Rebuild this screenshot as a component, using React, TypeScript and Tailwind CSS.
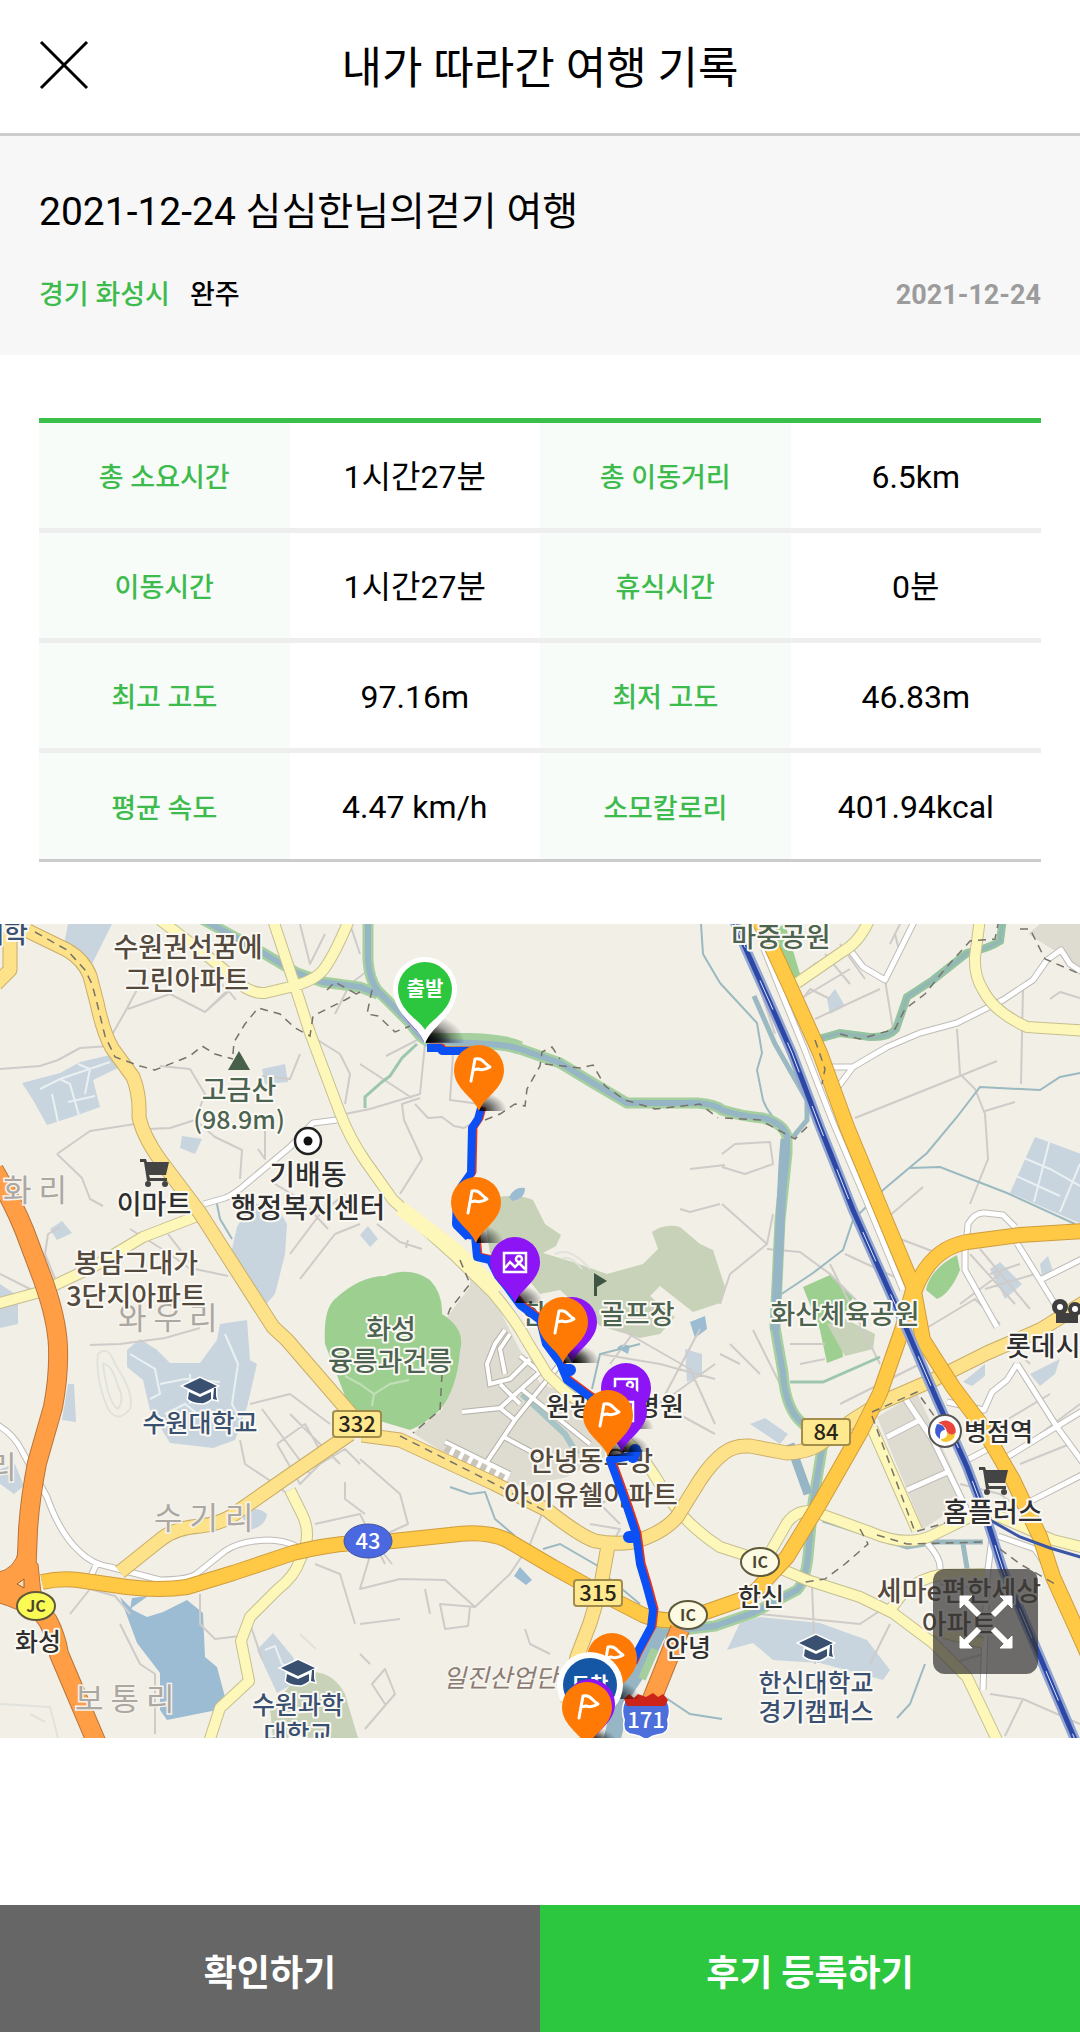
import { Fragment } from 'react';

/*  One row of the record table: two labels and two values.
 */
const rows = [
  ['총 소요시간', '1시간27분', '총 이동거리', '6.5km'],
  ['이동시간', '1시간27분', '휴식시간', '0분'],
  ['최고 고도', '97.16m', '최저 고도', '46.83m'],
  ['평균 속도', '4.47 km/h', '소모칼로리', '401.94kcal'],
];

const green = '#4c6350';
const brown = '#54493d';
const navy = '#3a5070';
const dark = '#2f2f2f';

// x, y (baseline), text, colour, size, anchor
const places: [number, number, string, string, number, 'start' | 'middle'][] = [
  [-20, 19, '대학', navy, 26, 'start'],
  [188, 33, '수원권선꿈에', brown, 27, 'middle'],
  [187, 66, '그린아파트', brown, 27, 'middle'],
  [239, 176, '고금산', green, 27, 'middle'],
  [239, 205, '(98.9m)', green, 25, 'middle'],
  [308, 261, '기배동', dark, 28, 'middle'],
  [308, 294, '행정복지센터', dark, 28, 'middle'],
  [154, 290, '이마트', dark, 27, 'middle'],
  [136, 349, '봉담그대가', brown, 27, 'middle'],
  [136, 382, '3단지아파트', brown, 27, 'middle'],
  [781, 23, '마중공원', green, 27, 'middle'],
  [845, 400, '화산체육공원', green, 27, 'middle'],
  [522, 400, '한', green, 27, 'start'],
  [600, 400, '골프장', green, 27, 'start'],
  [391, 415, '화성', green, 27, 'middle'],
  [390, 447, '융릉과건릉', green, 27, 'middle'],
  [200, 508, '수원대학교', navy, 25, 'middle'],
  [298, 790, '수원과학', navy, 25, 'middle'],
  [298, 819, '대학교', navy, 25, 'middle'],
  [38, 727, '화성', dark, 25, 'middle'],
  [546, 492, '원광', dark, 26, 'start'],
  [636, 492, '병원', dark, 26, 'start'],
  [591, 547, '안녕동우방', brown, 27, 'middle'],
  [591, 581, '아이유쉘아파트', brown, 27, 'middle'],
  [688, 733, '안녕', dark, 25, 'middle'],
  [761, 682, '한신', dark, 25, 'middle'],
  [964, 517, '병점역', dark, 25, 'start'],
  [993, 598, '홈플러스', dark, 27, 'middle'],
  [1006, 432, '롯데시네마', dark, 27, 'start'],
  [959, 677, '세마e편한세상', brown, 27, 'middle'],
  [959, 710, '아파트', brown, 27, 'middle'],
  [816, 768, '한신대학교', navy, 25, 'middle'],
  [816, 797, '경기캠퍼스', navy, 25, 'middle'],
];

const villages: [number, number, string][] = [
  [3, 277, '화 리'],
  [-12, 554, '리'],
  [118, 405, '와 우 리'],
  [154, 605, '수 기 리'],
  [75, 786, '보 통 리'],
];

// drawn twice: a wide dark stroke for the edge and the fill on top
const paleRoads = [
  'M273-4L293 56L310 109L340 189Q350 215 366 238L393 276L453 330L493 369Q515 395 527 417L547 450L567 469L600 492L640 530L653 549L670 576Q688 602 720 623L760 636L807 656L860 673L893 689L933 719L967 753L997 816',
  'M160-4L200 26L233 53Q248 70 265 69L290 63Q315 57 324 45Q335 30 349-4',
  'M-4 380L40 368L93 343L143 313L200 291',
  'M870-6Q860 18 842 28L797 59',
  'M980-6L975 33Q974 52 983 66Q994 88 1027 103L1090 107',
  'M290 566L302 590Q313 612 300 636Q295 652 277 666L250 693L241 717L249 757L220 784L209 818',
  'M768 632L787 599Q796 586 812 587L870 608Q907 624 933 611L970 593Q990 587 1007 596L1053 616L1085 624',
  'M872 504L917 606',
  'M890 686L903 669Q920 654 940 651L985 650',
  'M933 706L983 719',
];

const yellowRoads = [
  'M28 7L67 26Q84 36 90 52L97 79Q103 108 112 124L133 153Q140 170 139 193Q143 212 160 236L200 289L230 336L273 403L287 416L350 489L362 505',
  'M10 8L10 46L-4 60',
  'M350 510L283 556L230 593Q218 600 200 602Q174 604 160 616L120 648',
  'M362 511L400 516L493 559L547 586Q580 612 595 617Q614 621 633 618Q662 610 677 593L700 556Q712 538 724 529Q734 521 750 522L787 529Q808 528 820 520L853 496L880 479L933 456L987 429L1040 406L1085 378',
  'M608 622L600 666L590 699L577 733L568 780',
];

const goldRoads = [
  'M42 658Q60 654 78 656L127 663Q160 667 187 663L233 649L293 629Q325 621 353 619L393 617L450 611Q485 606 507 616L553 643L600 669L643 691Q670 702 700 690L740 676Q755 670 763 659L787 633L820 579L860 509L880 469L902 406L913 366',
  'M758-6L770 19L793 69L820 129L847 203L880 283L913 362L923 416L953 463L980 499L1013 556L1040 613L1053 653L1077 706L1090 735',
  'M915 366Q930 325 967 318L1020 311L1085 307',
];

const whiteRoads = [
  'M337 196L313 199L290 223L247 259Q235 270 225 274L204 280',
  'M-4 500Q14 510 22 527L47 573Q60 610 80 628Q92 640 110 643L160 656Q185 656 195 651L225 627Q240 617 267 616Q285 616 297 623',
  'M97 639L91 652',
  'M850 26L863 43L885 56L915-4',
  'M830 143L853 143L887 123L920 109L957 99L1003 76L1033 56L1047 36L1061 26L1070 40L1085 50',
  'M853 143L838 163',
  'M967 312L968 300Q975 288 985 289L1003 291L1015 303',
  'M965 322L965 346L997 403',
  'M1017 319L1040 356L1062 392M1040 356L1084 334',
  'M1017 440L1057 503L1084 540M1017 440L1007 456L992 468L984 486L947 478',
  'M905 474L933 516L968 588M887 513L920 496M907 566L950 547M967 536L990 524M1007 533L1084 486M1027 579L1084 550',
  'M993 606L987 653L983 766M927 619Q941 634 940 645M998 612L1035 625L1045 640',
  'M762 20L782 70L804 124L832 196L866 276L903 366',
];

const lanes = [
  'M125 88L113 109L110 122L80 124L58 136L40 142L0 145M125 88L140 60M128 85L170 70L205 88L228 68L210 45M205 88L228 66L236 76',
  'M148 205L170 204L195 196L215 213L242 226L240 255M57 230L90 207L148 198M57 230L82 254L90 275L103 282M195 196L205 170L190 145L160 142',
  'M308 110L340 130L350 150L345 180M300 130L290 155L262 152M265 200L265 235L258 225M275 260L300 275L328 305',
  'M45 330L48 310L60 303M45 330L58 362M0 350L30 365L50 372M130 305L170 330L190 345M290 330L320 290L345 270M300 355L335 310L360 300M168 310L195 345L228 352',
  'M90 421L120 420L165 414L200 404M240 516L245 540L275 560L300 580M250 480L290 470L330 500M277 520L305 500L325 535L300 560L277 520M262 485L310 550M290 490L340 540M320 540L345 525L360 540',
  'M315 600L360 590L385 640M315 640L340 650L355 700M270 680L250 700L262 735M200 670L200 700L215 715L240 712M130 690L115 672L90 665L70 690M120 700L140 740L155 750L155 810',
  'M425 120L420 170L370 185L345 190M453 130L450 176L480 180M420 174L402 180L404 196L422 235L400 270M415 180L428 194L442 193L454 202L464 204L474 198M360 140L412 174M425 112L386 132',
  'M690 245L725 241M680 285L690 288L720 280M377 300L400 318L422 325M408 316L406 324',
  'M360 535L400 570L408 600L375 615L360 665L400 655L445 656L475 683L510 650L530 620L542 590M360 700L400 695M475 683L440 680L445 705L468 702L470 683M430 690L425 665M392 640L380 625M525 705L530 720L550 730M345 558L345 575L365 590',
  'M600 430L660 440L715 455M620 405L690 445L715 500M640 400L610 440M660 480L715 440M700 405L660 480L715 510M590 600L620 605L612 620M640 560L600 580L620 600',
  'M773 290L767 320L722 280M722 230L735 220L770 218L773 240L745 250L722 243M767 320L730 350L720 380M767 325L800 328L830 350L860 380M830 340L880 440M845 330L910 360',
  'M957 105L960 150L975 165L985 190L988 235L970 280M1023 64L1021 160M855 194L960 152L997 137M985 187L1015 178M880 300L923 263M1050 75L1060 68L1080 74M895 313L940 330L960 320',
  'M790 60L815 40L860 20M800 75L850 45M815 95L880 65M825 30L850 60M840 20L865 55M795 85L810 65L830 75M885 56L893 105M890 20L900 0M900 30L895 10',
  'M970 330L1015 380M980 325L1030 385M990 350L1020 340M985 365L1035 350M960 380L1000 350M925 405L975 375L1000 400',
  'M753 406L790 480M790 420L825 420M800 440L825 435M840 480L920 440M730 420L760 450M720 430L740 440M920 430L900 400M950 450L1010 420L1030 440M1000 500L1050 470M1040 510L1080 480M1020 540L1070 520M960 560L1000 570L1040 600',
  'M812 660L815 740M760 690L860 700L890 680M870 740L890 700M933 720L960 740M990 770L1023 775L1080 800M1023 775L1005 812M940 660L980 665M950 740L983 730',
  'M365 805L395 770L385 745L372 760L385 780M360 730L370 740',
  'M740 0L742 18L755 50L775 110M770 0L790 60M350 0L360 30M300 0L310 40L325 10M370 45L350 60L335 90',
];

const streams = [
  'M720 59L757 99L762 129L757 146L763 176Q770 195 787 203',
  'M1085 148L1060 153L1040 166L980 163L957 193L927 229L883 266L853 296L843 326L813 349L777 373',
  'M910 244L940 243L1007 269L1075 300',
  'M701 0L703 30L720 59',
  'M450 563L470 570L485 568L495 595L515 612M543 625L560 620L598 642M598 645L640 680M640 420L600 430L592 465',
  'M216 275L220 295L232 315M660 770L690 790L722 795M925 740L910 780L897 794',
];

const river =
  'M368-4L368 36Q369 54 377 66L410 99Q420 114 427 117L470 119Q505 120 520 125L560 139L593 159L627 179L697 179Q715 180 722 186Q740 192 763 194Q783 199 787 212L787 229L780 296L775 403L783 449Q785 480 798 495L823 519L813 579L808 633Q805 658 797 666L753 689L715 702Q680 706 660 709L643 739L623 769L612 816';
const sideRiver = 'M200-6L253 23L297 49L323 58L360 63L378 70';
const eastRiver = 'M1003-6L1000 17Q990 24 967 29L933 56L907 73L896 105Q888 114 870 113L840 109L815 116';
const rail = 'M733-6L745 23L770 79L792 129L820 203L853 286L890 369L907 406L937 476L967 543L987 596L1003 646L1040 733L1076 818';
const route =
  'M427 124L440 124L442 127L470 127L479 132M481 184L478 195L472 204L471 249L461 263L457 299L468 311L475 312L477 333L490 336L498 352L507 363L520 381L540 396L546 420L560 439L567 456L590 473L608 485M636 531L610 536L617 555L627 583L636 610L640 640L646 660L653 686L651 703L637 729L632 740';
const blockRoads =
  'M505 406L495 420L487 440L490 460L510 455L530 435M510 410L500 425L505 450M462 488L500 484L540 448L520 432M500 484L515 496L560 440M515 496L480 548M520 464L590 520M502 512L545 535M445 518L510 550M500 460L520 480';

function Pin({ x, y, fill, icon }: { x: number; y: number; fill: string; icon?: 'flag' | 'photo' }) {
  return (
    <g transform={`translate(${x} ${y})`}>
      <path d="M0 41L2 34L15 22Q25 28 28 41Z" fill="url(#shade)" />
      <path d="M0 41C-5 27-25 19-25 0A25 25 0 0 1 25 0C25 19 5 27 0 41Z" fill={fill} />
      {icon === 'flag' && (
        <path d="M-8 11L-4-11Q2-12 5-8Q8-5 11-3Q5 1-1-1L-6 0" fill="none" stroke="#fff" strokeWidth="3" strokeLinejoin="round" strokeLinecap="round" />
      )}
      {icon === 'photo' && (
        <g fill="none" stroke="#fff" strokeWidth="2.5">
          <path d="M-11-9H11V10H-11ZM-10 6L-5 0L0 5L4 1L10 7" />
          <circle cx="4" cy="-3" r="3" />
        </g>
      )}
    </g>
  );
}

function Cap({ x, y }: { x: number; y: number }) {
  return (
    <g transform={`translate(${x} ${y})`} stroke="#fff" strokeWidth="3" paintOrder="stroke" fill={navy}>
      <path d="M0-13L17-5L0 3L-17-5ZM-11 1L0 6L11 1V8Q5 13 0 12Q-7 12-12 8ZM14-3H16V5L17 9L13 8Z" />
    </g>
  );
}

function Cart({ x, y }: { x: number; y: number }) {
  return (
    <g transform={`translate(${x} ${y})`} fill="#444">
      <path d="M-14-13H-8L-7-10H15L12 3H-5L-4 6H13V9H-7L-10-10H-14Z" />
      <circle cx="-6" cy="12" r="3" />
      <circle cx="11" cy="12" r="3" />
    </g>
  );
}

function Shield({ x, y, text }: { x: number; y: number; text: string }) {
  return (
    <g>
      <rect x={x - 24} y={y - 13} width="48" height="26" rx="3" fill="#ffe98f" stroke="#a38d4c" strokeWidth="2" />
      <text x={x} y={y + 8} textAnchor="middle" fontSize="22" fontWeight="500" fill="#2b2618">{text}</text>
    </g>
  );
}

function Junction({ x, y, text, fill }: { x: number; y: number; text: string; fill: string }) {
  return (
    <g>
      <ellipse cx={x} cy={y} rx="19" ry="14" fill={fill} stroke="#5f5a3c" strokeWidth="2" />
      <text x={x} y={y + 6} textAnchor="middle" fontSize="16" fontWeight="700" fill="#4b472f">{text}</text>
    </g>
  );
}

function Roads({ paths, edge, fill, width }: { paths: string[]; edge: string; fill: string; width: number }) {
  return (
    <g fill="none" strokeLinejoin="round">
      <path d={paths.join('')} stroke={edge} strokeWidth={width + 2} />
      <path d={paths.join('')} stroke={fill} strokeWidth={width} />
    </g>
  );
}

/*  The map with the walked route on it.
 */
function RouteMap() {
  return (
    <svg viewBox="0 0 1080 814" className="block h-auto w-full font-['Noto_Sans_CJK_KR','Noto_Sans',sans-serif]" role="img" aria-label="이동 경로 지도">
      <defs>
        <radialGradient id="shade" cx="0" cy="1" r="1">
          <stop offset="0" stopColor="#000" stopOpacity=".95" />
          <stop offset=".4" stopColor="#000" stopOpacity=".6" />
          <stop offset="1" stopColor="#000" stopOpacity="0" />
        </radialGradient>
      </defs>
      <rect width="1080" height="814" fill="#f2efe7" />

      {/* campuses and blocks */}
      <g fill="#c8d5df">
        <path d="M22 159L60 149L80 138L110 131L120 143L93 156L100 183L75 192L47 201L33 176ZM68 0H112L92 40L64 20ZM237 303L250 280L275 280L287 300L285 330L275 370L262 385L243 355L232 325Z" />
        <path d="M127 426L140 415L157 426L170 439L200 439L217 416L220 400L247 396L250 436L257 440L247 483L235 516L213 524L170 519L150 486L143 456L127 443ZM740 699L760 693L820 699L867 716L890 746L883 756L820 739L773 736L753 719L727 726ZM1035 213L1084 231V301L1010 269Z" />
        <path d="M257 726L273 709L293 733L300 756L277 769ZM50 305L62 297L72 309L57 316ZM262 145L285 140L288 158L265 160ZM182 212L202 215L195 230L180 224ZM68 460L74 460L76 498L62 496ZM0 545L15 540L24 562L14 570L0 560ZM0 360L18 372V400L0 404ZM360 311L368 302L378 315L370 323ZM240 590Q255 580 267 590Q266 602 250 606ZM750 500L765 494L788 510L780 520ZM990 345L1000 338L1022 360L1005 375ZM1040 340L1048 332L1054 350L1042 352ZM827 75L835 65L845 82L830 90ZM963 458L985 440L985 452L972 462ZM1030 450L1060 435L1055 450L1040 462ZM685 425L702 430V450L687 458Z" />
      </g>
      <g fill="none" stroke="#eaf0f2" strokeWidth="2">
        <path d="M40 165L60 155L70 160L80 195M60 155L110 138M52 170L58 198M68 178L95 172M90 145L85 170M78 140L90 145M130 430L155 445L160 470L150 475M160 460L185 455L220 458M190 450V480M225 410L238 440L232 480L240 495M165 490L185 480L210 500M1050 215L1034 278M1016 252L1060 272M1024 234L1050 245L1080 262M1080 240L1060 288M265 726L275 722L282 740L295 745" />
      </g>
      <path d="M470 343L493 373L520 426L540 459L587 479L612 529L567 553L503 567L413 509L442 486L457 443L447 393L470 363ZM877 493L917 469L950 540L966 577L923 605ZM1028 10L1040 0H1080V50L1060 30Z" fill="#dedbd1" />
      <path d="M497 273Q520 270 533 276L545 300L561 311L556 322L543 329L573 338L607 350L643 340L658 325L652 308Q665 299 680 303L700 320L713 326L725 363L720 379L693 388L660 362L650 372L675 393L660 410L640 414L600 402L560 366L540 370L520 345L505 360L490 330L485 296ZM300 750Q330 742 345 770L358 814H273L270 785Z" fill="#c8d2b8" />
      <path d="M325 420Q323 385 335 375Q360 352 385 352Q410 342 430 356Q443 370 442 390Q466 405 460 427Q457 465 440 486Q425 500 410 506L380 497L350 485ZM803 363L830 351L853 373L840 400L843 433L827 439L820 406ZM926 366Q930 345 957 331L960 346Q950 370 937 375ZM785 0L800 50L790 60L770 8Z" fill="#9dcf91" />
      <path d="M827 400L845 395L875 410L873 425L845 432Z" fill="#c8d2b8" />
      <path d="M345 452L360 460L374 470L390 460L409 456M374 470L372 482" fill="none" stroke="#c2e0b8" strokeWidth="2" />
      <path d="M120 673L133 686L147 693L163 688L187 676L203 689L205 733L217 743L225 773L217 786L167 796L160 786V749L137 719ZM509 273Q515 262 525 264Q525 275 512 277ZM617 424Q622 418 630 422L628 430ZM514 652L520 643L532 656L526 661ZM690 398L705 392L707 405L695 414ZM132 674L148 672L130 685Z" fill="#9cbcd3" />

      {/* lanes, streams and rivers */}
      <path d={lanes.join('')} fill="none" stroke="#cfcbc9" strokeWidth="2" strokeLinejoin="round" />
      <path d="M98 430Q108 420 115 440Q135 470 130 485Q118 500 108 485Q95 455 98 430ZM103 440Q112 440 118 462Q125 475 118 485Q108 480 103 440ZM555 330Q570 322 590 345M562 335Q570 330 582 345M300 710L316 725M0 780L50 783L58 814M30 790L45 798" fill="none" stroke="#e0e2db" strokeWidth="2" />
      <path d={streams.join('')} fill="none" stroke="#9ab9c0" strokeWidth="2" />
      <path d="M365 184V173L382 158L390 152L402 134L417 120M790 458L823 458L880 433" fill="none" stroke="#9dc7ad" strokeWidth="3" />
      <path d={river + sideRiver} fill="none" stroke="#a5cf9f" strokeWidth="11" />
      <path d="M427 116L470 116Q505 117 520 124" fill="none" stroke="#a5cf9f" strokeWidth="14" />
      <path d={river + sideRiver} fill="none" stroke="#96b5c5" strokeWidth="6" />
      <path d="M785 215L783 240L775 406M790 520L808 570" fill="none" stroke="#96b5c5" strokeWidth="9" />
      <path d={eastRiver} fill="none" stroke="#94c3a0" strokeWidth="8" />
      <path d={eastRiver} fill="none" stroke="#95b6b8" strokeWidth="3" />
      <path d="M754 72L775 120L807 176V196L793 213M823 596L877 613L907 623L937 618L983 618M963 620L968 650" fill="none" stroke="#9ab9c0" strokeWidth="5" />
      <path d="M660 704L643 739L623 769L612 816" fill="none" stroke="#96b5c5" strokeWidth="17" />
      <path d="M655 725L642 755" stroke="#a5cf9f" strokeWidth="8" />
      <path d="M522 470L565 510L577 530" fill="none" stroke="#a6c3c5" strokeWidth="6" />

      {/* block roads beside the forest */}
      <g fill="none">
        <path d={blockRoads} stroke="#b5b1a8" strokeWidth="6" />
        <path d={blockRoads} stroke="#fff" strokeWidth="4" />
        <path d="M445 524L507 556" stroke="#fff" strokeWidth="14" />
        <path d="M445 524L507 556" stroke="#c9c5bb" strokeWidth="8" strokeDasharray="6 4" />
      </g>

      <Roads paths={whiteRoads} edge="#bfbcb8" fill="#fff" width={5} />
      <Roads paths={paleRoads} edge="#c6bf92" fill="#fdf7b9" width={10} />
      <path d="M400 284L455 326L498 368" fill="none" stroke="#fdf7b9" strokeWidth="15" />
      <Roads paths={yellowRoads} edge="#c9ae68" fill="#fee28a" width={13} />
      <Roads paths={goldRoads} edge="#cf9d3c" fill="#ffc845" width={14} />

      {/* expressway */}
      <g strokeLinejoin="round">
        <path d="M-6 246Q14 280 25 308L43 356Q57 395 58 423Q59 452 53 483L37 539Q30 575 28 606L26 655Q34 680 48 697Q56 712 59 730L98 822M680 705L650 780" fill="none" stroke="#b9743a" strokeWidth="20" />
        <path d="M-4 649Q16 645 19 625L38 640L42 680L34 695Q20 685-4 678Z" fill="#ff9e45" stroke="#b9743a" />
        <path d="M-6 246Q14 280 25 308L43 356Q57 395 58 423Q59 452 53 483L37 539Q30 575 28 606L26 655Q34 680 48 697Q56 712 59 730L98 822M680 705L650 780" fill="none" stroke="#ff9e45" strokeWidth="18" />
        <path d="M17 660L24 655L24 664Z" fill="#ffd9a8" stroke="#9a6030" />
      </g>

      {/* railway */}
      <g fill="none">
        <path d={rail} stroke="#92a6cf" strokeWidth="10" />
        <path d={rail} stroke="#2c47a6" strokeWidth="5" />
        <path d={rail} stroke="#dfe6f5" strokeWidth="1" strokeDasharray="32 36" />
        <path d="M990 596L1020 613L1050 624L1084 634" stroke="#3a56a5" strokeWidth="3" />
      </g>

      {/* footpaths and tunnels */}
      <g fill="none" stroke="#77736a" strokeWidth="1.5" strokeDasharray="8 6">
        <path d="M35 8L67 26L85 46L92 60L97 79L105 112L115 133L140 142L155 146L190 132L202 122L215 130L233 135M233 130L234 118L245 100L258 84L280 90L295 104L310 112L313 92L345 76L360 68M327 66L335 58L360 72M372 66L367 90L378 92L395 108L410 102" />
        <path d="M485 196L500 190L515 180L525 182L527 165L540 142L542 128L552 123L560 135M545 140L580 144L593 141L605 162L625 176L655 185L700 180L718 194M725 194L760 196L795 215L810 200M815 116L825 145L822 160M840 110L860 115L895 105L905 85L925 70L945 45L970 17L995 15L998 0M1020 5L1030 5L1045 35L1080 50" />
        <path d="M460 336L470 360L450 385L447 393M442 450L440 486L413 509M400 512L493 559L547 588M872 488L917 468L940 500M872 492L915 608L948 598M860 605L868 620L845 640L825 655L805 658M877 611L907 620L985 618M1000 625L1020 640L1055 660" />
      </g>

      <g fontSize="31" fill="#aca7a1" stroke="#f5f2ec" strokeWidth="3" paintOrder="stroke">
        {villages.map(([x, y, name]) => (
          <text key={name} x={x} y={y}>{name}</text>
        ))}
      </g>
      <text x="443" y="763" fontSize="25" fontStyle="italic" fill="#8a7c74" stroke="#f7f4ee" strokeWidth="3" paintOrder="stroke">일진산업단지</text>

      <Shield x={357} y={500} text="332" />
      <Shield x={598} y={669} text="315" />
      <Shield x={826} y={508} text="84" />
      <ellipse cx="368" cy="617" rx="24" ry="17" fill="#4a68e0" stroke="#43559f" strokeWidth="1" />
      <text x="368" y="625" textAnchor="middle" fontSize="22" fontWeight="500" fill="#fff">43</text>
      <Junction x={36} y={682} text="JC" fill="#fbfb55" />
      <Junction x={688} y={691} text="IC" fill="#fdfae4" />
      <Junction x={760} y={638} text="IC" fill="#fdfae4" />

      <Cap x={200} y={467} />
      <Cap x={298} y={749} />
      <Cap x={816} y={724} />
      <Cart x={154} y={248} />
      <Cart x={993} y={556} />
      <path d="M239 127L250 146H228Z" fill="#46604a" />
      <circle cx="308" cy="217" r="13" fill="#fff" stroke="#222" strokeWidth="2.5" />
      <circle cx="308" cy="217" r="4.5" fill="#111" />
      <path d="M594 349L607 357L597 363V372H594Z" fill="#3f5644" />
      <g fill="#3f3f3f">
        <circle cx="1060" cy="383" r="8" />
        <circle cx="1075" cy="385" r="7" />
        <path d="M1056 389H1078V399H1056Z" />
        <circle cx="1060" cy="383" r="3" fill="#fff" />
        <circle cx="1075" cy="385" r="3" fill="#fff" />
      </g>
      <g transform="translate(945 507)">
        <circle r="16" fill="#fff" stroke="#555" strokeWidth="2" />
        <path d="M-7-8Q2-14 9-6Q13 2 8 4Q2 4 1-2Q-3-8-7-8Z" fill="#e9453b" />
        <path d="M10 2Q10 10 1 11Q-4 11-4 8Q3 8 2 1Q6 6 10 2Z" fill="#f8c72e" />
        <path d="M-8-7Q-1-7 0-1Q-6-1-5 8Q-13 3-8-7Z" fill="#3f5bd0" />
      </g>

      <g fontWeight="500" stroke="#fbf9f4" strokeWidth="4" strokeLinejoin="round" paintOrder="stroke">
        {places.map(([x, y, name, fill, size, anchor]) => (
          <text key={`${name}${y}`} x={x} y={y} fill={fill} fontSize={size} textAnchor={anchor}>{name}</text>
        ))}
      </g>

      <g transform="translate(646 791)">
        <path d="M-20-15Q-25-5-21 5Q-24 18-12 19Q-4 20 0 25Q4 20 12 19Q24 18 21 5Q25-5 20-15Z" fill="#4d6fdc" stroke="#fff" strokeWidth="3" paintOrder="stroke" />
        <path d="M-22-16L-17-21L-12-17L-8-21L0-18L7-22L12-18L17-21L22-15L19-9H-19Z" fill="#cc2418" />
        <text y="13" textAnchor="middle" fontSize="22" fontWeight="500" fill="#fff">171</text>
      </g>

      {/* route and pins */}
      <g fill="none" strokeLinejoin="round">
        <path d={route} stroke="#e5341f" strokeWidth="7" transform="translate(2 -1)" />
        <path d={route} stroke="#0a50f5" strokeWidth="8" />
        <path d="M466 262L459 274L458 300L470 312" stroke="#0a50f5" strokeWidth="12" />
        <path d="M566 446H570M629 613H632M633 533L635 526" stroke="#0a50f5" strokeWidth="12" strokeLinecap="round" />
      </g>
      <Pin x={424} y={77} fill="#8c14f5" />
      <g transform="translate(425 65)">
        <path d="M0 54L4 40L22 25Q35 36 40 54Z" fill="url(#shade)" />
        <path d="M0 55C-5 38-32 26-32 0A32 32 0 0 1 32 0C32 26 5 38 0 55Z" fill="#fff" />
        <path d="M0 41C-5 31-27 22-27 0A27 27 0 0 1 27 0C27 22 5 31 0 41Z" fill="#2dc63f" />
        <text y="7" textAnchor="middle" fontSize="20" fontWeight="700" fill="#fff">출발</text>
      </g>
      <Pin x={479} y={146} fill="#ff7a05" icon="flag" />
      <Pin x={476} y={278} fill="#ff7a05" icon="flag" />
      <Pin x={515} y={338} fill="#8c14f5" icon="photo" />
      <Pin x={572} y={398} fill="#8c14f5" />
      <Pin x={563} y={398} fill="#ff7a05" icon="flag" />
      <Pin x={626} y={464} fill="#8c14f5" icon="photo" />
      <Pin x={622} y={487} fill="#8c14f5" icon="photo" />
      <Pin x={608} y={491} fill="#ff7a05" icon="flag" />
      <Pin x={612} y={734} fill="#ff7a05" icon="flag" />
      <g transform="translate(590 761)">
        <circle r="33" fill="#fff" />
        <circle r="27" fill="#1556a5" />
        <text y="7" textAnchor="middle" fontSize="20" fontWeight="700" fill="#fff">도착</text>
      </g>
      <Pin x={590} y={780} fill="#8c14f5" />
      <Pin x={587} y={783} fill="#ff7a05" icon="flag" />
    </svg>
  );
}

function Header() {
  return (
    <header className="grid grid-cols-[56px_1fr_56px] border-b-3 border-[#cccccc] px-9 pt-8 pb-[26px]">
      <button type="button" aria-label="닫기" className="flex h-16 w-14 items-center">
        <svg viewBox="0 0 56 56" className="h-14 w-14" fill="none" stroke="#000" strokeWidth="3">
          <path d="M5 6L51 52M51 6L5 52" />
        </svg>
      </button>
      <h1 className="text-center text-[44px] leading-[75px]">내가 따라간 여행 기록</h1>
    </header>
  );
}

export default function App() {
  return (
    <div className="flex min-h-screen flex-col bg-white font-['Roboto','Noto_Sans_CJK_KR',sans-serif] text-black">
      <Header />
      <main className="grow">
        <section className="bg-[#f7f7f7] px-[39px] pt-[46px] pb-10">
          <h2 className="text-[39px] leading-[60px]">2021-12-24 심심한님의걷기 여행</h2>
          <div className="mt-[34px] flex items-center gap-5 text-[27px] leading-[39px] font-medium">
            <span className="text-[#3dbb4c]">경기 화성시</span>
            <span>완주</span>
            <time className="ml-auto text-[27px] font-bold text-[#9c9c9c]">2021-12-24</time>
          </div>
        </section>

        <section className="px-[39px] pt-[63px] pb-[62px]">
          <table className="w-full table-fixed border-collapse border-t-5 border-b-3 border-t-[#3bbf4b] border-b-[#cccccc] text-center">
            <tbody>
              {rows.map((cells, i) => (
                <tr key={cells[0]} className={i > 0 ? 'h-[110px] border-t-5 border-[#eeeeee]' : 'h-[110px]'}>
                  {[0, 2].map((n) => (
                    <Fragment key={n}>
                      <th scope="row" className="bg-[#f7fcf9] pt-1.5 text-[27px] font-medium text-[#3dbb4c]">{cells[n]}</th>
                      <td className="pt-0.5 text-[32px]">{cells[n + 1]}</td>
                    </Fragment>
                  ))}
                </tr>
              ))}
            </tbody>
          </table>
        </section>

        <section className="relative overflow-hidden">
          <RouteMap />
          <button type="button" aria-label="지도 크게 보기" className="absolute right-[42px] bottom-16 flex h-[105px] w-[105px] items-center justify-center rounded-xl bg-[#333333]/70">
            <svg viewBox="0 0 54 54" className="h-[54px] w-[54px]" fill="#fff" stroke="#fff">
              <path d="M7 7L20 20M47 7L34 20M7 47L20 34M47 47L34 34" strokeWidth="6" />
              <path d="M1 1H13L1 13ZM53 1H41L53 13ZM1 53H13L1 41ZM53 53H41L53 41Z" strokeWidth="1" />
            </svg>
          </button>
        </section>
      </main>
      <footer className="grid grid-cols-2 text-[36px] leading-[54px] font-bold text-white">
        <button type="button" className="bg-[#666666] pt-[42px] pb-[31px]">확인하기</button>
        <button type="button" className="bg-[#2dc73f] pt-[42px] pb-[31px]">후기 등록하기</button>
      </footer>
    </div>
  );
}
